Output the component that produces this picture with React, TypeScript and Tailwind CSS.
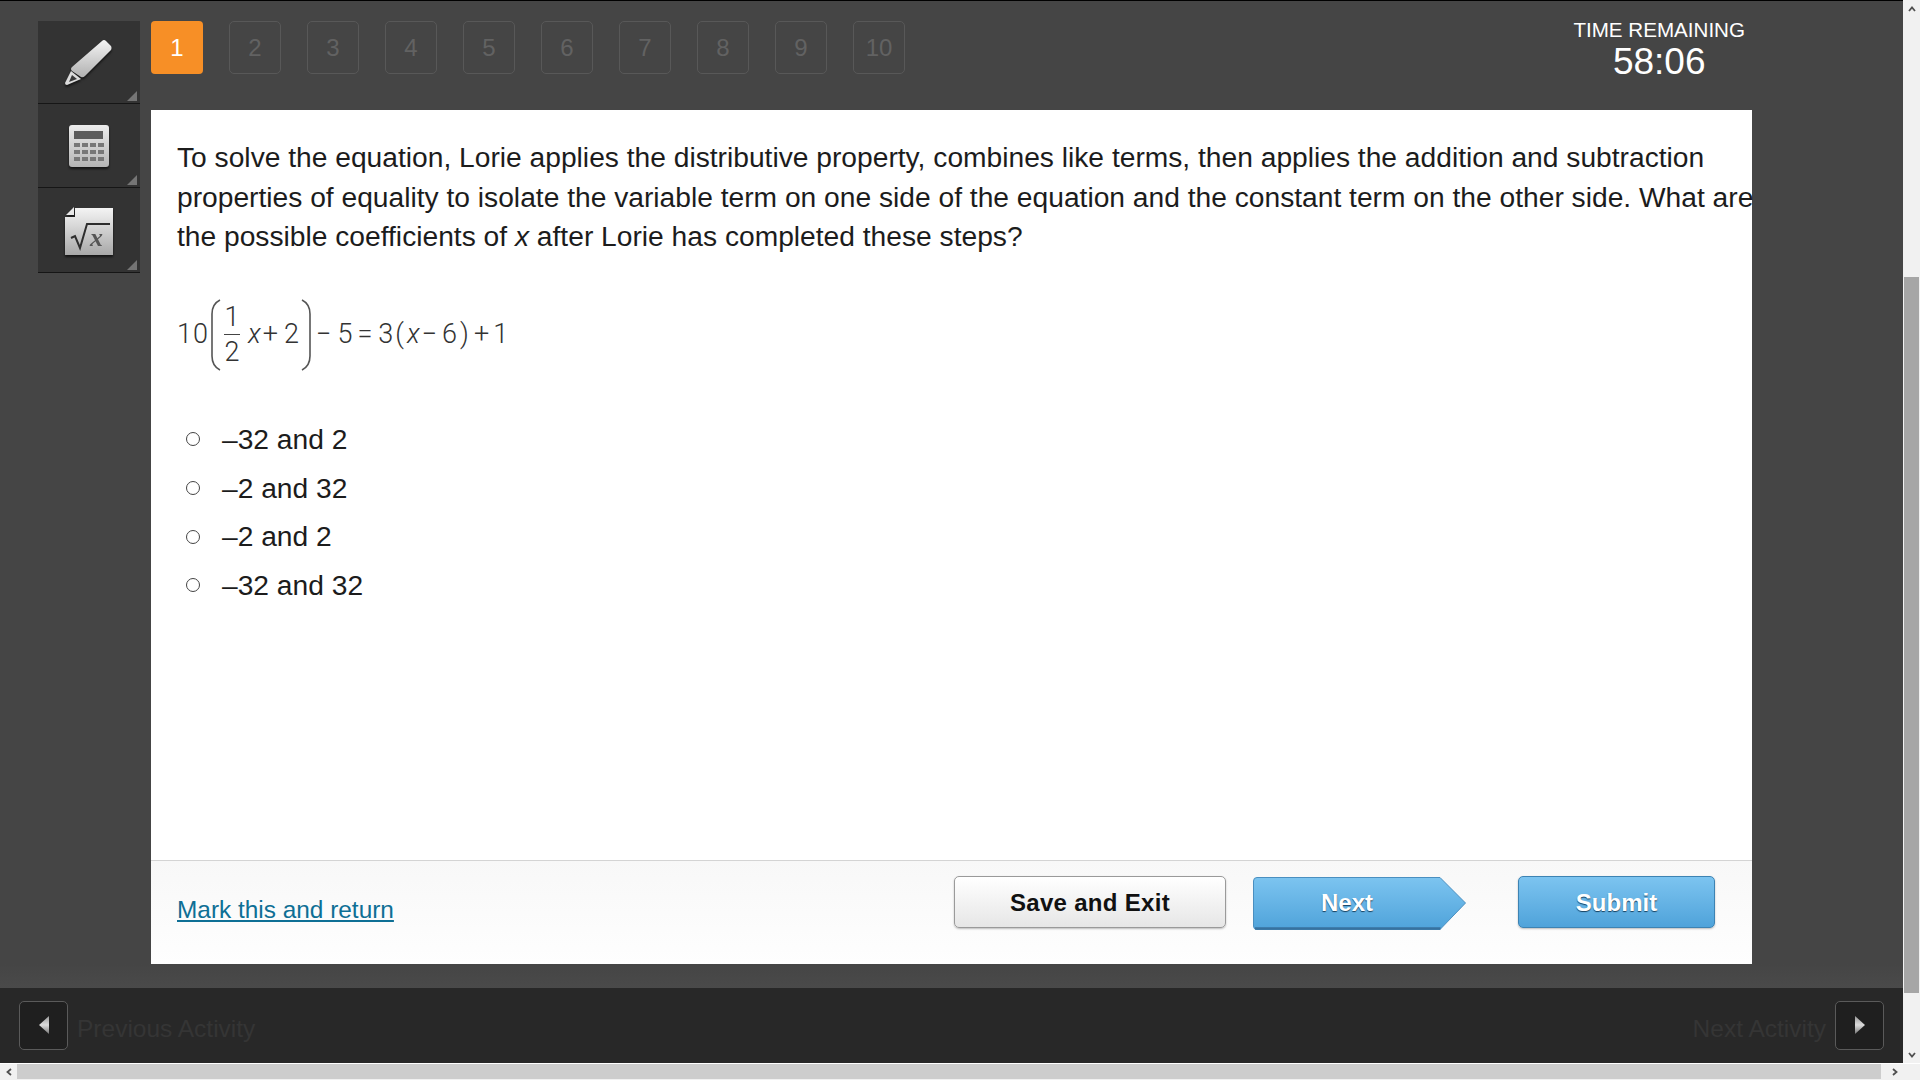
const FONT = "font-['Liberation_Sans',Arial,sans-serif]";

const steps = [2, 3, 4, 5, 6, 7, 8, 9, 10];
const answers = ['–32 and 2', '–2 and 32', '–2 and 2', '–32 and 32'];

function PencilIcon() {
  return (
    <svg width="50" height="50" viewBox="0 0 50 50" className="mt-[1px] drop-shadow-[0_2px_1px_rgba(0,0,0,0.6)]">
      <defs>
        <linearGradient id="pen" x1="0" y1="0" x2="0" y2="1">
          <stop offset="0" stopColor="#f4f4f4" />
          <stop offset="1" stopColor="#b0b0b0" />
        </linearGradient>
      </defs>
      <path d="M38 3 Q40 1 42 3 L47 8 Q48 10 47 12 L21 38 Q19 40 17 39 L8 33 Q6 31 8 29 Z" fill="url(#pen)" />
      <path d="M7 33 L17 41 L3 47 Q1 47 1 45 Z" fill="#dcdcdc" />
      <path d="M8 37 L13 41 L5 44 Z" fill="#3a3a3a" />
    </svg>
  );
}

function CalculatorIcon() {
  const keys: number[][] = [];
  for (let r = 0; r < 3; r++) for (let c = 0; c < 4; c++) keys.push([6 + c * 8, 19 + r * 7]);
  return (
    <svg width="42" height="44" viewBox="0 0 42 44" className="drop-shadow-[0_2px_1px_rgba(0,0,0,0.6)]">
      <defs>
        <linearGradient id="calc" x1="0" y1="0" x2="0" y2="1">
          <stop offset="0" stopColor="#ececec" />
          <stop offset="1" stopColor="#b4b4b4" />
        </linearGradient>
      </defs>
      <rect x="1" y="1" width="40" height="42" rx="3" fill="url(#calc)" />
      <rect x="6" y="7" width="29" height="8" fill="#5c5c5c" />
      {keys.map(([x, y]) => (
        <rect key={`${x}-${y}`} x={x} y={y} width="6" height="4" fill="#777" />
      ))}
    </svg>
  );
}

function FormulaIcon() {
  return (
    <svg width="50" height="50" viewBox="0 0 50 50" className="mt-[4px] drop-shadow-[0_2px_1px_rgba(0,0,0,0.6)]">
      <defs>
        <linearGradient id="doc" x1="0" y1="0" x2="0" y2="1">
          <stop offset="0" stopColor="#f4f4f4" />
          <stop offset="1" stopColor="#a8a8a8" />
        </linearGradient>
      </defs>
      <path d="M11 1 H49 V48 H1 V10 H11 Z" fill="url(#doc)" />
      <path d="M2 8 L10 0 V8 Z" fill="#e8e8e8" />
      <path d="M7 31 L11 29 L16 41 L23 17 H46" fill="none" stroke="#2e2e2e" strokeWidth="2" />
      <text x="26" y="39" fontFamily="'Liberation Serif',serif" fontStyle="italic" fontWeight="700" fontSize="26" fill="#555">x</text>
    </svg>
  );
}

function ToolButton({ children, height }: { children: React.ReactNode; height: string }) {
  return (
    <div className={`relative flex items-center justify-center border-b border-[#161616] bg-[#333333] ${height}`}>
      {children}
      <div className="absolute bottom-[2px] right-[3px] h-0 w-0 border-b-[10px] border-l-[10px] border-b-[#757575] border-l-transparent" />
    </div>
  );
}

function Paren({ flip }: { flip?: boolean }) {
  return (
    <svg width="13" height="74" viewBox="0 0 13 74" className={flip ? '-scale-x-100' : ''}>
      <path d="M11 2 Q3 6 3 16 V58 Q3 68 11 72" fill="none" stroke="#555" strokeWidth="1.6" />
    </svg>
  );
}

function Equation() {
  return (
    <div className="mt-[41px] flex h-[74px] items-center font-['Roboto',sans-serif] text-[27px] font-light leading-none text-[#333]">
      <span className="tracking-[1px]">10</span>
      <span><Paren /></span>
      <div className="mx-[2px] flex w-[16px] flex-col items-center">
        <span className="pb-[3px]">1</span>
        <span className="h-[1px] w-full bg-[#444]" />
        <span className="pt-[4px]">2</span>
      </div>
      <span className="ml-[6px] italic">x</span>
      <span className="ml-[2px]">+</span>
      <span className="ml-[6px]">2</span>
      <span className="ml-[1px]"><Paren flip /></span>
      <span className="ml-[3px]">−</span>
      <span className="ml-[6px]">5</span>
      <span className="ml-[5px]">=</span>
      <span className="ml-[6px]">3</span>
      <span className="ml-[2px]">(</span>
      <span className="ml-[3px] italic">x</span>
      <span className="ml-[2px]">−</span>
      <span className="ml-[5px]">6</span>
      <span className="ml-[3px]">)</span>
      <span className="ml-[5px]">+</span>
      <span className="ml-[4px]">1</span>
    </div>
  );
}

function Arrow({ dir, size = 10 }: { dir: 'up' | 'down' | 'left' | 'right'; size?: number }) {
  const d = {
    up: 'M2 7 L5 3.5 L8 7',
    down: 'M2 3 L5 6.5 L8 3',
    left: 'M7 2 L3.5 5 L7 8',
    right: 'M3 2 L6.5 5 L3 8',
  }[dir];
  return (
    <svg width={size} height={size} viewBox="0 0 10 10">
      <path d={d} fill="none" stroke="#505050" strokeWidth="1.8" />
    </svg>
  );
}

function ActivityButton({ dir }: { dir: 'left' | 'right' }) {
  return (
    <div className="flex h-[49px] w-[49px] items-center justify-center rounded-[5px] border border-[#5a5a5a] bg-[#1f1f1f] pb-[1px]">
      <svg width="12" height="20" viewBox="0 0 12 20">
        <defs>
          <linearGradient id={`tri-${dir}`} x1="0" y1="0" x2="0" y2="1">
            <stop offset="0" stopColor="#999" />
            <stop offset="0.5" stopColor="#dcdcdc" />
            <stop offset="1" stopColor="#777" />
          </linearGradient>
        </defs>
        <path d={dir === 'left' ? 'M11 1 V19 L1 10 Z' : 'M1 1 V19 L11 10 Z'} fill={`url(#tri-${dir})`} />
      </svg>
    </div>
  );
}

export default function App() {
  return (
    <div className={`flex h-screen w-full flex-col overflow-hidden bg-white ${FONT}`}>
      <div className="flex min-h-0 flex-1">
        <div className="flex min-w-0 flex-1 flex-col border-t border-t-black bg-[#454545]">
          <div className="flex flex-1 pl-[38px] pt-[20px]">
            <div className="mr-[11px] w-[102px]">
              <ToolButton height="h-[83px]"><PencilIcon /></ToolButton>
              <ToolButton height="h-[84px]"><CalculatorIcon /></ToolButton>
              <ToolButton height="h-[85px]"><FormulaIcon /></ToolButton>
            </div>

            <div className="flex w-[1601px] flex-col">
              <div className="flex h-[89px] items-start justify-between pr-[7px]">
                <div className="flex gap-[26px]">
                  <div className="flex h-[53px] w-[52px] items-center justify-center rounded-[4px] bg-[#f78f26] text-[24px] text-white">1</div>
                  {steps.map(n => (
                    <div key={n} className="flex h-[53px] w-[52px] items-center justify-center rounded-[5px] border border-[#585858] text-[24px] text-[#626262]">
                      {n}
                    </div>
                  ))}
                </div>
                <div className="-mt-[3px] text-center text-white">
                  <div className="text-[20.6px] leading-[24px]">TIME REMAINING</div>
                  <div className="pt-[1px] text-[37px] leading-[38px]">58:06</div>
                </div>
              </div>

              <div className="flex h-[854px] flex-col bg-white">
                <div className="flex-1 pl-[26px] pt-[28px] text-[#1c1c1c]">
                  <p className="w-[1580px] text-[28.2px] leading-[39.6px]">
                    To solve the equation, Lorie applies the distributive property, combines like terms, then applies the addition and subtraction properties of equality to isolate the variable term on one side of the equation and the constant term on the other side. What are the possible coefficients of <i>x</i> after Lorie has completed these steps?
                  </p>
                  <Equation />
                  <ul className="mt-[43px] flex flex-col">
                    {answers.map(a => (
                      <li key={a} className="flex h-[48.7px] items-center text-[28.2px]">
                        <span className="ml-[9px] mr-[22px] h-[14px] w-[14px] rounded-full border-[1.5px] border-[#444] bg-white" />
                        {a}
                      </li>
                    ))}
                  </ul>
                </div>

                <div className="flex h-[104px] items-start justify-between border-t border-t-[#d4d4d4] bg-gradient-to-b from-[#f8f8f8] to-[#fefefe] pl-[26px] pr-[37px] pt-[15px]">
                  <a className="mt-[18px] text-[24.4px] leading-[32px] text-[#0e6f95] underline">Mark this and return</a>
                  <div className="flex items-start">
                    <button className="h-[52px] w-[272px] rounded-[5px] border border-[#9a9a9a] bg-gradient-to-b from-white to-[#e6e6e6] pt-[2px] text-[24px] font-bold tracking-[0.3px] text-[#111] shadow-[0_1px_2px_rgba(0,0,0,0.25)]">
                      Save and Exit
                    </button>
                    <div className="relative ml-[27px] mt-[1px] h-[53px] w-[213px]">
                      <svg className="absolute inset-0" width="213" height="53" viewBox="0 0 213 53">
                        <defs>
                          <linearGradient id="next" x1="0" y1="0" x2="0" y2="1">
                            <stop offset="0" stopColor="#7cc4f0" />
                            <stop offset="1" stopColor="#4fa3da" />
                          </linearGradient>
                        </defs>
                        <path d="M4 0.5 H187 L212.5 26 L187 52.5 H4 Q0.5 52.5 0.5 49 V4 Q0.5 0.5 4 0.5 Z" fill="url(#next)" stroke="#4a8fc0" />
                        <path d="M2 51.5 H187.5" stroke="#37729f" strokeWidth="2.5" />
                      </svg>
                      <span className="absolute left-[68px] top-[11px] text-[24px] font-bold leading-[30px] text-white [text-shadow:0_1px_1px_#17405e]">Next</span>
                    </div>
                    <button className="ml-[52px] h-[52px] w-[197px] rounded-[5px] border border-[#3d83b3] bg-gradient-to-b from-[#7cc4f0] to-[#4fa3da] pt-[2px] text-[24px] font-bold text-white shadow-[0_1px_2px_rgba(0,0,0,0.25)] [text-shadow:0_1px_1px_#17405e]">
                      Submit
                    </button>
                  </div>
                </div>
              </div>
            </div>
          </div>

          <div className="h-[24px] bg-gradient-to-b from-[#454545] to-[#4a4a4a]" />
          <div className="flex h-[75px] items-center justify-between bg-[#282828] pl-[19px] pr-[19px] text-[24.5px] text-[#353535]">
            <div className="flex items-center gap-[9px]">
              <ActivityButton dir="left" />
              <span className="pt-[8px]">Previous Activity</span>
            </div>
            <div className="flex items-center gap-[9px]">
              <span className="pt-[8px]">Next Activity</span>
              <ActivityButton dir="right" />
            </div>
          </div>
        </div>

        <div className="flex w-[17px] flex-col bg-[#f1f1f1]">
          <div className="flex h-[17px] items-center justify-center"><Arrow dir="up" /></div>
          <div className="mx-[1px] mt-[260px] h-[716px] bg-[#a6a6a6]" />
          <div className="mt-auto flex h-[17px] items-center justify-center"><Arrow dir="down" /></div>
        </div>
      </div>

      <div className="flex h-[17px] border-t border-t-white bg-[#f1f1f1]">
        <div className="flex w-[17px] items-center justify-center"><Arrow dir="left" /></div>
        <div className="h-[15px] w-[1864px] bg-[#cdcdcd]" />
        <div className="ml-[5px] flex w-[17px] items-center justify-center"><Arrow dir="right" /></div>
      </div>
    </div>
  );
}
